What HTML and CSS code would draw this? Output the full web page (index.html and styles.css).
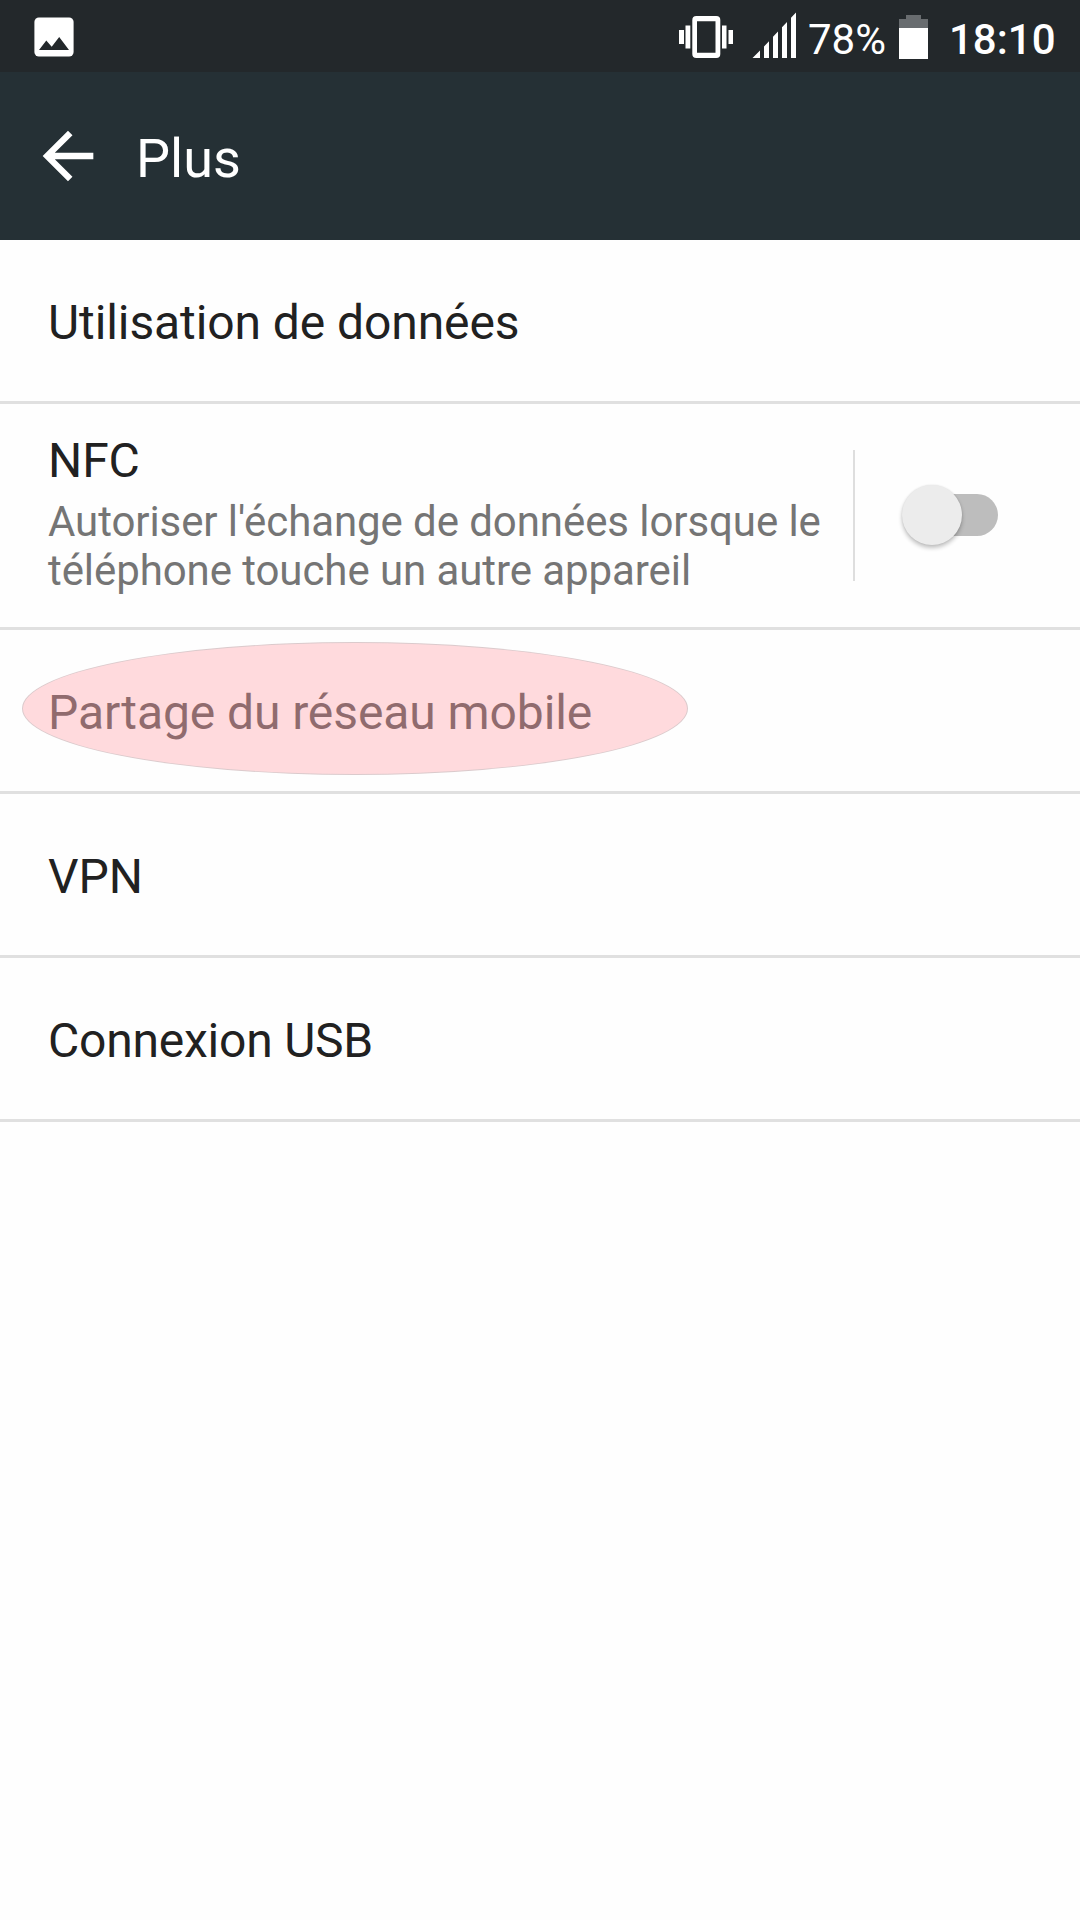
FILE: index.html
```html
<!DOCTYPE html>
<html lang="fr">
<head>
<meta charset="utf-8">
<title>Plus</title>
<link rel="stylesheet" href="styles.css">
</head>
<body>
<div class="status-bar">
  <svg class="icon-image" width="40" height="40" viewBox="0 0 40 40"><rect x=".4" y=".4" width="39.2" height="39.2" rx="4.5" fill="#fff"/><path class="cutout" d="M5 33l7.3-9.6 5.4 6.4L25.2 20 35 33z"/></svg>
  <div class="status-right">
    <svg class="icon-vibrate" width="54" height="42" viewBox="0 0 54 42" fill="#fff"><path d="M0 14h5v14H0zM6.5 9.5h4.800v23H6.500zM43 9.500h4.500v23H43zM49.500 14H54v14h-4.500z"/><path fill-rule="evenodd" d="M17.300 0h20a4 4 0 0 1 4 4v34a4 4 0 0 1-4 4h-20a4 4 0 0 1-4-4V4a4 4 0 0 1 4-4zM18 5.300v31.400h18.500V5.300z"/></svg>
    <svg class="icon-signal" width="44" height="46" viewBox="0 0 44 46" fill="#fff"><path d="M.5 46L8 38.500V46zM12 34.500l5-5.300V46h-5zM21 24.800l5-5.300V46h-5zM30 15.300l5-5.300V46h-5zM39 5.800L44 .5V46h-5z"/></svg>
    <span class="battery-level">78%</span>
    <svg class="icon-battery" width="29" height="44" viewBox="0 0 29 44"><path fill="#686c6f" d="M7 0h15v4h7v9H0V4h7z"/><path fill="#fff" d="M0 13h29v31H0z"/></svg>
    <span class="clock">18:10</span>
  </div>
</div>
<header class="app-bar">
  <svg class="icon-back" width="76" height="76" viewBox="0 0 24 24" fill="#fff"><path d="M20 11H7.830l5.590-5.590L12 4l-8 8 8 8 1.410-1.410L7.830 13H20z"/></svg>
  <h1 class="title">Plus</h1>
</header>
<main class="settings">
  <div class="row"><span class="label">Utilisation de données</span></div>
  <div class="row row-nfc">
    <div class="text">
      <span class="label">NFC</span>
      <span class="summary">Autoriser l'échange de données lorsque le<br>téléphone touche un autre appareil</span>
    </div>
    <div class="divider"></div>
    <div class="switch"><div class="thumb"></div></div>
  </div>
  <div class="row row-tethering"><span class="label">Partage du réseau mobile</span><div class="highlight"></div></div>
  <div class="row"><span class="label">VPN</span></div>
  <div class="row"><span class="label label-usb">Connexion USB</span></div>
</main>
</body>
</html>
```
FILE: styles.css
```css
* { box-sizing: border-box; }

body {
  margin: 0;
  width: 1080px;
  height: 1920px;
  overflow: hidden;
  background: #fefefe;
  color: #212121;
  font-family: Roboto, sans-serif;
}

.status-bar {
  display: flex;
  justify-content: space-between;
  height: 72px;
  padding: 0 26px 0 34px;
  background: #23282b;
  color: #fff;
}

.icon-image { margin-top: 17px; }
.cutout { fill: #23282b; }

.status-right {
  display: flex;
  align-items: flex-start;
  font-size: 42px;
  line-height: 50px;
}

.icon-vibrate { margin: 16px 19px 0 0; }
.icon-signal { margin: 12px 12px 0 0; }
.battery-level { width: 91px; margin-top: 15px; white-space: nowrap; }
.icon-battery { margin: 15px 21px 0 0; }
.clock { width: 105px; margin-top: 15px; font-weight: 500; white-space: nowrap; }

.app-bar {
  display: flex;
  align-items: center;
  height: 168px;
  padding-left: 30px;
  background: #253035;
  color: #fff;
}

.title {
  margin: 4px 0 0 30px;
  font-size: 54px;
  font-weight: 400;
}

.row {
  display: flex;
  align-items: center;
  height: 164px;
  padding: 4px 48px 0;
  border-bottom: 3px solid #e0e0e0;
}

.label {
  font-size: 48px;
  line-height: 56px;
  letter-spacing: -.09px;
  white-space: nowrap;
}

.label-usb { letter-spacing: -.22px; }

.row-nfc {
  height: 226px;
  padding: 0 82px 0 48px;
}

.text {
  display: flex;
  flex-direction: column;
  gap: 8px;
  width: 805px;
  margin-top: -4px;
}

.summary {
  color: #757575;
  font-size: 42px;
  line-height: 49px;
  letter-spacing: -.08px;
  white-space: nowrap;
}

.divider {
  width: 2px;
  height: 131px;
  background: #dedede;
}

.switch {
  display: flex;
  align-items: center;
  width: 84px;
  height: 42px;
  margin: -1px 0 0 59px;
  border-radius: 21px;
  background: #bdbdbd;
}

.thumb {
  flex: none;
  width: 60px;
  height: 60px;
  margin-left: -12px;
  border-radius: 50%;
  background: #ececec;
  box-shadow: 0 3px 4px rgba(0, 0, 0, .24), 0 0 2px rgba(0, 0, 0, .1);
}

.row-tethering { position: relative; }

.highlight {
  position: absolute;
  left: 22px;
  top: 12px;
  width: 666px;
  height: 133px;
  border: 1px solid rgba(165, 180, 180, .4);
  border-radius: 50%;
  background: rgba(255, 181, 187, .5);
}
```
